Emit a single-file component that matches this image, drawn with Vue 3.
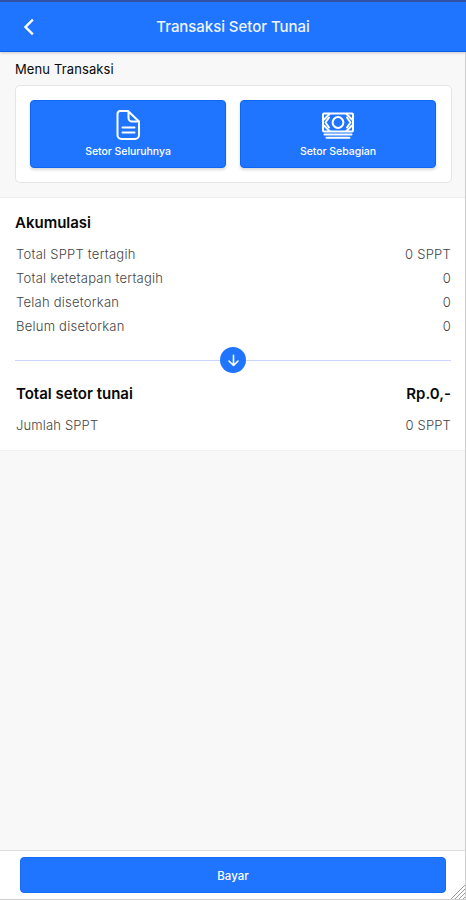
<script setup>
const totals = [
  { label: 'Total SPPT tertagih', value: '0 SPPT' },
  { label: 'Total ketetapan tertagih', value: '0' },
  { label: 'Telah disetorkan', value: '0' },
  { label: 'Belum disetorkan', value: '0' },
]
</script>

<template>
  <div class="screen">
    <header class="bar">
      <button class="back" aria-label="Kembali">
        <svg width="12" height="18" viewBox="0 0 12 18"><path d="M9 2.500 2.500 9 9 15.500" /></svg>
      </button>
      <h1 class="title">Transaksi Setor Tunai</h1>
    </header>

    <section class="menu">
      <h2 class="menu-title">Menu Transaksi</h2>
      <div class="card">
        <button class="tile">
          <svg class="icon" width="36" height="32" viewBox="0 0 36 32">
            <path d="M10.500 2H18l11 10.500V26a4 4 0 0 1-4 4H11.500a4 4 0 0 1-4-4V5a3 3 0 0 1 3-3Z" />
            <path d="M18.500 2.500V9a3.500 3.500 0 0 0 3.500 3.500h6.500M12.500 18.500h12M12.500 23.500h12" />
          </svg>
          <span>Setor Seluruhnya</span>
        </button>
        <button class="tile">
          <svg class="icon cash" width="36" height="32" viewBox="0 0 36 32">
            <rect x="3" y="4.500" width="30" height="18" rx="1" />
            <circle cx="18" cy="13.500" r="5.400" />
            <path d="M4 10.500 9.500 5M26.500 5l5.500 5.500M4 16.500 9.500 22M26.500 22l5.500-5.500" />
            <path d="m9 8.500-3.500 5 3.500 5M27 8.500l3.500 5-3.500 5M4.500 25.500h27M6.500 28.800h23" />
          </svg>
          <span>Setor Sebagian</span>
        </button>
      </div>
    </section>

    <section class="summary">
      <h2 class="heading">Akumulasi</h2>
      <dl class="totals">
        <div v-for="row in totals" :key="row.label" class="row">
          <dt>{{ row.label }}</dt>
          <dd>{{ row.value }}</dd>
        </div>
      </dl>
      <div class="divider">
        <span class="arrow">
          <svg width="13" height="13" viewBox="0 0 13 13"><path d="M6.500 1.300v10M2 7l4.500 4.500L11 7" /></svg>
        </span>
      </div>
      <div class="row grand"><span>Total setor tunai</span><span class="amount">Rp.0,-</span></div>
      <div class="row count"><span>Jumlah SPPT</span><span>0 SPPT</span></div>
    </section>

    <footer class="footer">
      <button class="pay">Bayar</button>
      <svg class="grip" width="16" height="16" viewBox="0 0 16 16"><path d="M1 16 16 1M5 16 16 5M9 16l7-7M13 16l3-3" /></svg>
    </footer>
  </div>
</template>

<style>
body { margin: 0; }
</style>

<style scoped>
.screen {
  box-sizing: border-box;
  position: relative;
  display: flex;
  flex-direction: column;
  width: 100%;
  height: 100vh;
  overflow: hidden;
  background: #f8f8f8;
  font-family: Inter, "Liberation Sans", sans-serif;
  color: #080808;
}
.screen::after {
  content: "";
  position: absolute;
  top: 52px;
  right: 0;
  bottom: 0;
  width: 1px;
  background: #cecece;
}
h1, h2, dl, dd { margin: 0; }
button { border: 0; padding: 0; font: inherit; color: #fff; }
svg { display: block; fill: none; stroke: #fff; stroke-linecap: round; stroke-linejoin: round; }
.bar {
  box-sizing: border-box;
  display: grid;
  grid-template-columns: 57px 1fr 57px;
  align-items: center;
  height: 52px;
  border-top: 2px solid #3152a8;
  border-bottom: 1px solid #0c5fee;
  background: #1f75ff;
  box-shadow: 0 1px 3px #0003;
}
.back { justify-self: center; background: none; }
.back svg { stroke-width: 2.4; stroke-linecap: square; stroke-linejoin: miter; }
.title { text-align: center; font-size: 15px; font-weight: 500; line-height: 20px; letter-spacing: -.05px; color: #eef4ff; }
.menu {
  box-sizing: border-box;
  height: 146px;
  padding: 8px 14px 0 15px;
  border-bottom: 1px solid #ededed;
}
.menu-title { font-size: 13px; font-weight: 400; line-height: 18px; letter-spacing: .12px; }
.card {
  box-sizing: border-box;
  display: grid;
  grid-template-columns: 1fr 1fr;
  gap: 14px;
  height: 98px;
  margin-top: 7px;
  padding: 14px 15px 14px 14px;
  border: 1px solid #e5e5e5;
  border-radius: 5px;
  background: #fff;
}
.tile {
  display: flex;
  flex-direction: column;
  align-items: center;
  height: 68px;
  padding-top: 8px;
  box-sizing: border-box;
  border: 1px solid #0e66f5;
  border-radius: 4px;
  background: #1f75ff;
  box-shadow: 0 2px 3px #00000026;
  font-size: 10.500px;
  font-weight: 500;
  line-height: 14px;
  letter-spacing: -.04px;
}
.tile span { margin-top: 4px; }
.icon { stroke-width: 2; }
.summary {
  box-sizing: border-box;
  height: 253px;
  padding: 15px 15px 0;
  border-bottom: 1px solid #f1f1f1;
  background: #fff;
}
.heading { font-size: 15px; font-weight: 600; line-height: 20px; }
.totals { margin-top: 9px; }
.row {
  display: flex;
  align-items: center;
  justify-content: space-between;
  height: 24px;
  padding-left: 1px;
  font-size: 13px;
  font-weight: 300;
  letter-spacing: .24px;
  color: #444;
}
.divider { display: flex; align-items: center; height: 26px; margin-top: 9px; }
.divider::before, .divider::after { content: ""; flex: 1; height: 1px; background: #cbd6fa; }
.arrow {
  display: grid;
  place-items: center;
  width: 26px;
  height: 26px;
  border-radius: 50%;
  background: #1f75ff;
}
.arrow svg { stroke-width: 1.600; }
.grand { height: 24px; margin-top: 8px; font-size: 15px; font-weight: 600; letter-spacing: 0; color: #080808; }
.count { margin-top: 8px; letter-spacing: .15px; }
.footer {
  box-sizing: border-box;
  position: relative;
  height: 50px;
  margin-top: auto;
  padding: 6px 20px;
  border-top: 1px solid #dedede;
  border-bottom: 1px solid #cfcfcf;
  background: #fff;
}
.pay {
  display: block;
  box-sizing: border-box;
  width: 100%;
  height: 36px;
  padding-top: 1px;
  border: 1px solid #166bf7;
  border-radius: 4px;
  background: #1f75ff;
  font-size: 11.500px;
  font-weight: 500;
}
.grip { position: absolute; right: 0; bottom: 0; stroke: #999; stroke-width: 1; }
</style>
